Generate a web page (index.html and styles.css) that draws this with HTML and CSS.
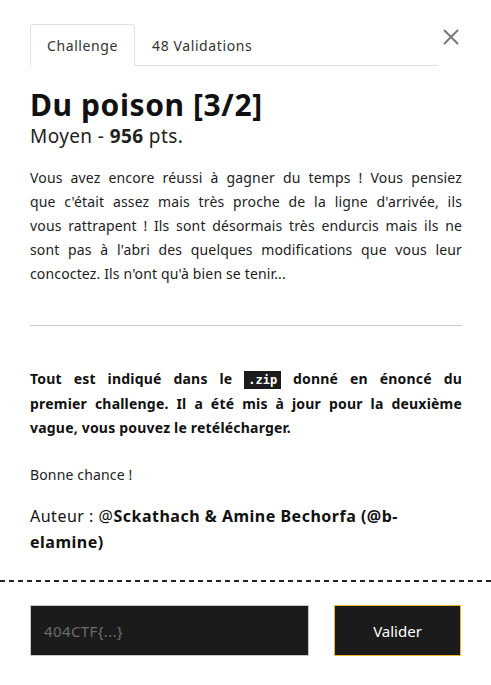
FILE: index.html
```html
<!DOCTYPE html>
<html lang="fr">
<head>
<meta charset="utf-8">
<link rel="stylesheet" href="styles.css">
</head>
<body>
<div class="modal">
  <div class="head">
    <ul class="tabs">
      <li class="tab active">Challenge</li>
      <li class="tab">48 Validations</li>
    </ul>
    <button class="close" aria-label="Fermer">
      <svg width="18" height="18" viewBox="0 0 18 18"><path d="M2 2L16 16M16 2L2 16" stroke="#777" stroke-width="2" fill="none"/></svg>
    </button>
  </div>
  <h1 class="title">Du poison [3/2]</h1>
  <div class="sub">Moyen - <b>956</b> pts.</div>
  <p class="desc"><span class="ln">Vous avez encore réussi à gagner du temps ! Vous pensiez</span><span class="ln">que c'était assez mais très proche de la ligne d'arrivée, ils</span><span class="ln">vous rattrapent ! Ils sont désormais très endurcis mais ils ne</span><span class="ln">sont pas à l'abri des quelques modifications que vous leur</span><span class="last">concoctez. Ils n'ont qu'à bien se tenir...</span></p>
  <hr class="sep">
  <p class="note"><span class="ln">Tout est indiqué dans le <code>.zip</code> donné en énoncé du</span><span class="ln">premier challenge. Il a été mis à jour pour la deuxième</span><span class="last">vague, vous pouvez le retélécharger.</span></p>
  <p class="luck">Bonne chance !</p>
  <p class="author">Auteur : @<b>Sckathach &amp; Amine Bechorfa (@b-elamine)</b></p>
</div>
<div class="dash"></div>
<form class="submit">
  <input class="flag" type="text" placeholder="404CTF{...}">
  <button class="validate" type="button">Valider</button>
</form>
</body>
</html>
```
FILE: styles.css
```css
* { box-sizing: border-box; }
body {
  margin: 0;
  background: #fff;
  font-family: "Noto Sans", "Open Sans", sans-serif;
  color: #222;
}
.modal { padding: 24px 29px 0 30px; }
.head { display: flex; align-items: flex-start; }
.tabs {
  list-style: none; margin: 0; padding: 0;
  display: flex; width: 408px;
  border-bottom: 1px solid #dee2e6;
}
.tab {
  font-size: 14px; color: #333; letter-spacing: 0.6px;
  padding: 11px 16px 10px 16px;
  border: 1px solid transparent;
  border-radius: 4px 4px 0 0;
  margin-bottom: -1px;
  line-height: 19px;
}
.tab.active { border-color: #dee2e6 #dee2e6 #fff; background: #fff; }
.close {
  border: 0; background: none; padding: 0; margin: 4px 0 0 4px;
  width: 18px; height: 18px; cursor: pointer;
}
.title {
  font-size: 30px; font-weight: 700; color: #111; letter-spacing: 0.6px;
  margin: 20px 0 0; line-height: 38px;
}
.sub { font-size: 19px; color: #222; line-height: 24px; letter-spacing: 0.4px; }
.desc {
  font-size: 14px; line-height: 24px; letter-spacing: 0.15px;
  margin: 18px 0 0; color: #222;
}
.ln { display: block; text-align: justify; text-align-last: justify; }
.last { display: block; }
.sep { border: 0; border-top: 1px solid #c8c8c8; margin: 39px 0 0; }
.note {
  font-size: 14px; font-weight: 700; line-height: 24px; letter-spacing: 0.2px;
  margin: 41px 0 0; color: #111;
}
.note code {
  font-family: "DejaVu Sans Mono", monospace; font-size: 12px; letter-spacing: 0;
  background: #1b1b1b; color: #fff; padding: 2px 4px;
}
.luck { font-size: 14px; line-height: 24px; margin: 23px 0 0; letter-spacing: 0.15px; }
.author { font-size: 16px; line-height: 26px; margin: 16px 0 0; color: #111; letter-spacing: 0.5px; }
.dash {
  margin-top: 25px; height: 2px;
  background: repeating-linear-gradient(to right, #222 0 5px, transparent 5px 9px);
}
.submit {
  display: flex; gap: 25px; padding: 23px 30px 0;
}
.flag {
  width: 279px; height: 51px;
  background: #1b1b1b; border: 1px solid #c8c8c8;
  color: #ddd; font: 15px "Noto Sans", sans-serif; letter-spacing: 0.4px; padding: 0 13px;
}
.flag::placeholder { color: #6c6c6c; }
.validate {
  width: 127px; height: 51px;
  background: #1b1b1b; border: 1px solid #f0b429;
  color: #fff; font: 15px "Noto Sans", sans-serif;
}
```
